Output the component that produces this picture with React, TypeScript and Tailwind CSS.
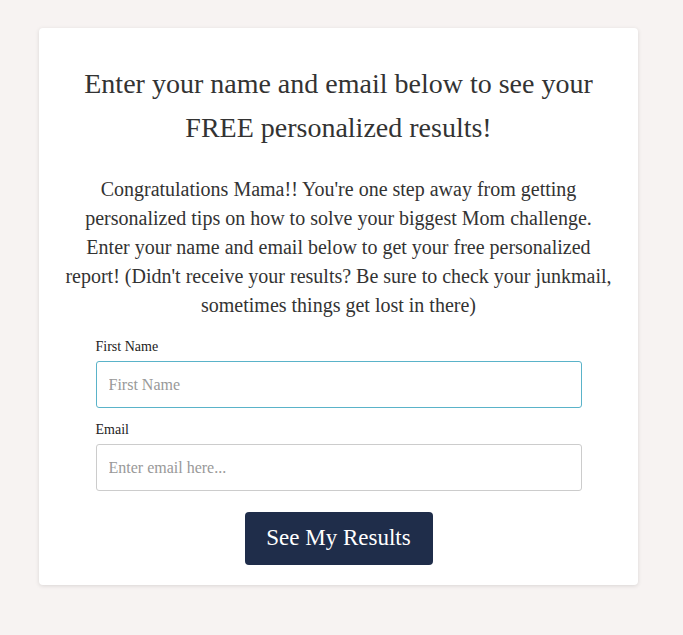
export default function App() {
  return (
    <div className="min-h-screen w-full bg-[#f7f3f2] pt-[28px] font-['Liberation_Serif',serif] text-[#333]">
      <div className="mx-[39px] flex w-[599px] flex-col items-center rounded-[4px] bg-white px-[20px] pt-[34px] pb-[20px] shadow-[0_1px_4px_rgba(0,0,0,0.12)]">
        <h1 className="text-center text-[28px] leading-[44px] text-[#333]">
          Enter your name and email below to see your
          <br />
          FREE personalized results!
        </h1>

        <p className="mt-[25px] text-center text-[20px] leading-[29px] text-[#333]">
          Congratulations Mama!! You're one step away from getting
          <br />
          personalized tips on how to solve your biggest Mom challenge.
          <br />
          Enter your name and email below to get your free personalized
          <br />
          report! (Didn't receive your results? Be sure to check your junkmail,
          <br />
          sometimes things get lost in there)
        </p>

        <form className="mt-[18px] flex w-[486px] flex-col">
          <label className="text-[14px] leading-[17px] text-[#222]">
            First Name
          </label>
          <input
            type="text"
            placeholder="First Name"
            className="mt-[6px] h-[47px] w-full rounded-[3px] border border-[#5ab3c9] px-[12px] text-[16px] text-[#333] outline-none placeholder:text-[#999]"
          />
          <label className="mt-[13px] text-[14px] leading-[17px] text-[#222]">
            Email
          </label>
          <input
            type="email"
            placeholder="Enter email here..."
            className="mt-[6px] h-[47px] w-full rounded-[3px] border border-[#ccc] px-[12px] text-[16px] text-[#333] outline-none placeholder:text-[#999]"
          />
          <div className="mt-[21px] flex justify-center">
            <button
              type="button"
              className="h-[53px] w-[188px] rounded-[4px] bg-[#1f2d4a] text-[23px] text-white"
            >
              See My Results
            </button>
          </div>
        </form>
      </div>
    </div>
  );
}
